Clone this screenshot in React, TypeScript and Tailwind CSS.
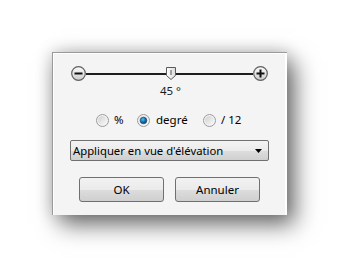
import React from "react";

const font = { fontFamily: '"Noto Sans", "Open Sans", sans-serif' };

// Round −/+ step button at either end of the slider
function StepButton({ plus }: { plus?: boolean }): React.JSX.Element {
    return (
        <svg width="15" height="15" viewBox="0 0 15 15" className="shrink-0">
            <defs>
                <linearGradient id={plus ? "gp" : "gm"} x1="0" y1="0" x2="0" y2="1">
                    <stop offset="0" stopColor="#fbfbfb" />
                    <stop offset="0.5" stopColor="#e6e6e6" />
                    <stop offset="1" stopColor="#c9c9c9" />
                </linearGradient>
            </defs>
            <circle cx="7.5" cy="7.5" r="6.8" fill={`url(#${plus ? "gp" : "gm"})`} stroke="#5f5f5f" strokeWidth="1.2" />
            <rect x="3.5" y="6.5" width="8" height="2" fill="#111" />
            {plus && <rect x="6.5" y="3.5" width="2" height="8" fill="#111" />}
        </svg>
    );
}

function Thumb(): React.JSX.Element {
    return (
        <svg width="10" height="13" viewBox="0 0 10 13" className="absolute left-[95px] top-[1px]">
            <defs>
                <linearGradient id="gt" x1="0" y1="0" x2="1" y2="0">
                    <stop offset="0" stopColor="#ffffff" />
                    <stop offset="1" stopColor="#dadada" />
                </linearGradient>
            </defs>
            <path d="M0.5 0.5 H9.5 V8.5 L5 12.5 L0.5 8.5 Z" fill="url(#gt)" stroke="#5a5a5a" strokeWidth="1" />
            <rect x="4.5" y="3" width="1" height="5" fill="#555" />
        </svg>
    );
}

function Radio({ checked }: { checked?: boolean }): React.JSX.Element {
    return (
        <svg width="13" height="13" viewBox="0 0 13 13" className="shrink-0">
            <defs>
                <linearGradient id="gr" x1="0" y1="0" x2="1" y2="1">
                    <stop offset="0" stopColor="#d0d0d0" />
                    <stop offset="1" stopColor="#fafafa" />
                </linearGradient>
                <radialGradient id="gd" cx="0.4" cy="0.35" r="0.7">
                    <stop offset="0" stopColor="#4fc3f7" />
                    <stop offset="0.5" stopColor="#1673b4" />
                    <stop offset="1" stopColor="#0b3c66" />
                </radialGradient>
            </defs>
            <circle cx="6.5" cy="6.5" r="6" fill="#f4f4f4" stroke="#9a9a9a" strokeWidth="1" />
            <circle cx="6.5" cy="6.5" r="4.5" fill="url(#gr)" />
            {checked && <circle cx="6.5" cy="6.5" r="3.3" fill="url(#gd)" stroke="#1f3f5f" strokeWidth="0.6" />}
        </svg>
    );
}

const btn =
    "w-[85px] h-[25px] border border-[#707070] rounded-[3px] bg-[linear-gradient(#f2f2f2_0%,#ebebeb_50%,#dddddd_51%,#cfcfcf_100%)] text-[11.5px] text-black";

export default function App(): React.JSX.Element {
    return (
        <div className="w-[339px] h-[267px] bg-white pl-[52px] pt-[52px]" style={font}>
            <div className="w-[235px] h-[163px] bg-white border-t border-l border-[#9a9a9a] shadow-[8px_10px_22px_rgba(0,0,0,0.55),0_0_16px_rgba(0,0,0,0.2)]">
                <div className="h-full mr-[2px] mb-[2px] border-t border-l border-white bg-[#f4f4f4] flex flex-col items-center">
                    {/* slider */}
                    <div className="relative mt-[12px] w-[197px] h-[15px] flex items-center">
                        <StepButton />
                        <div className="flex-1 h-[2px] bg-[#1e1e1e]" />
                        <StepButton plus />
                        <Thumb />
                    </div>
                    <div className="mt-[2px] text-[11.5px] leading-[16px] text-[#1c1c1c] pl-[2px]">45 °</div>

                    {/* unit */}
                    <div className="mt-[13px] self-stretch pl-[42px] flex items-center text-[11.5px] leading-[16px] text-black">
                        <Radio />
                        <span className="ml-[5px] w-[23px]">%</span>
                        <Radio checked />
                        <span className="ml-[6px] w-[47px]">degré</span>
                        <Radio />
                        <span className="ml-[5px]">/ 12</span>
                    </div>

                    {/* application mode */}
                    <div className="mt-[12px] w-[199px] h-[21px] flex items-center justify-between border border-[#707070] rounded-[2px] bg-[linear-gradient(#f3f3f3_0%,#ebebeb_50%,#dddddd_51%,#cfcfcf_100%)] pl-[2px] pr-[6px]">
                        <span className="text-[11.3px] leading-[16px] text-black">Appliquer en vue d'élévation</span>
                        <svg width="7" height="4" viewBox="0 0 7 4"><path d="M0 0 H7 L3.5 4 Z" fill="#000" /></svg>
                    </div>

                    {/* actions */}
                    <div className="mt-[16px] flex gap-[11px]">
                        <button className={btn}>OK</button>
                        <button className={btn}>Annuler</button>
                    </div>
                </div>
            </div>
        </div>
    );
}
